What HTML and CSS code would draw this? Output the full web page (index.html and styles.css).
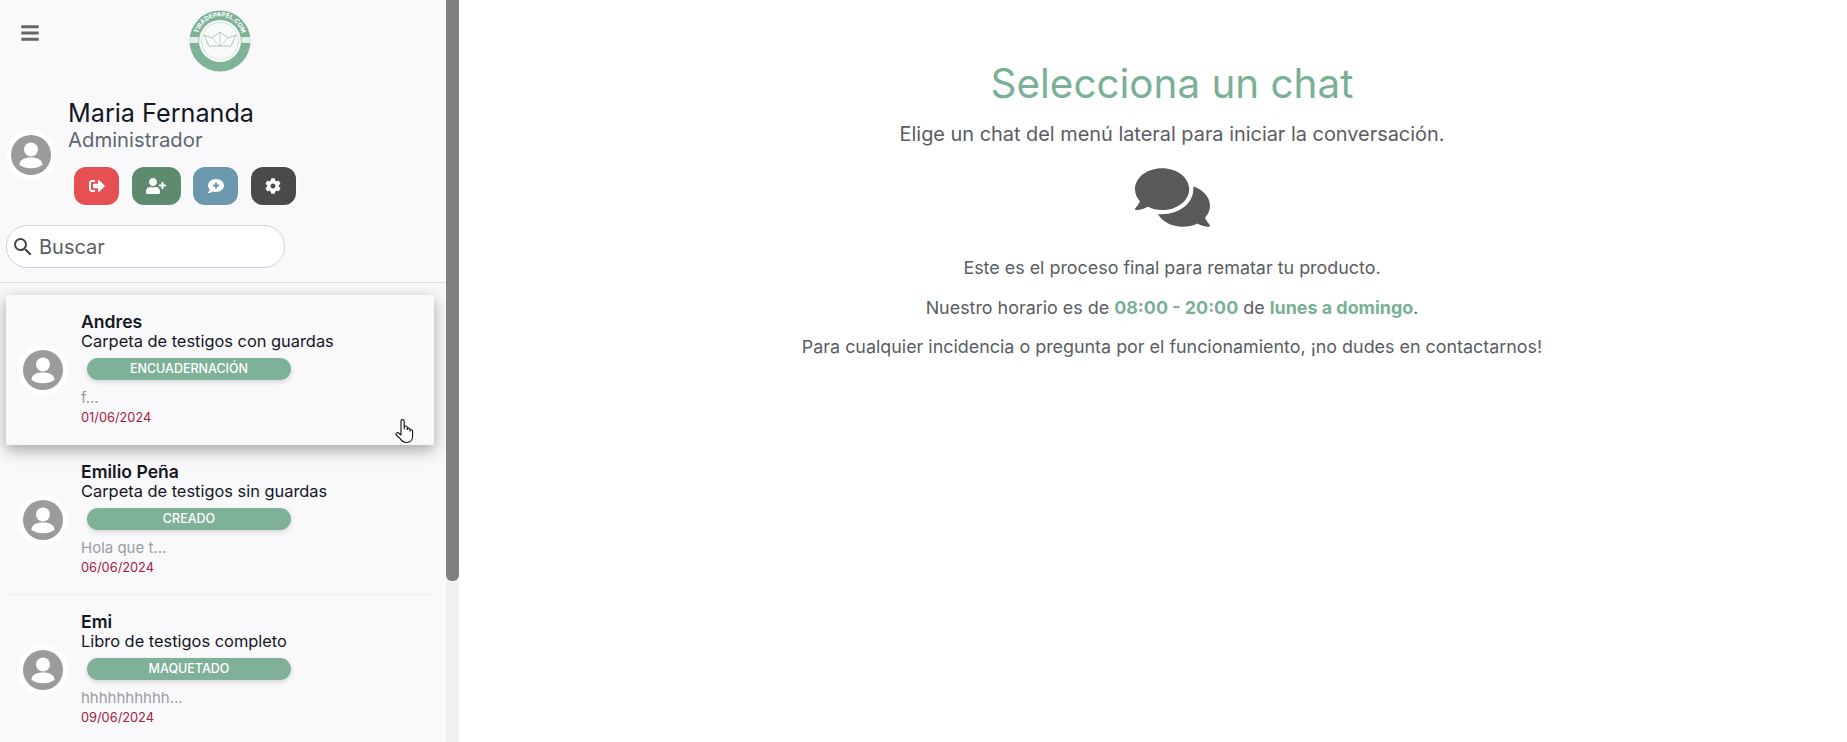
FILE: index.html

```html
<!DOCTYPE html>
<html lang="es">
<head>
  <meta charset="UTF-8" />
  <meta name="viewport" content="width=device-width, initial-scale=1.0" />
  <title>Chats</title>
  <link rel="stylesheet" href="styles.css">
</head>
<body>
  <aside class="sidebar">
    <div class="sidebar-body">
      <div class="top-bar">
        <button class="menu-btn" aria-label="Menu">
          <svg viewBox="0 0 448 512" width="18" height="20"><path d="M16 132h416c8.837 0 16-7.163 16-16V76c0-8.837-7.163-16-16-16H16C7.163 60 0 67.163 0 76v40c0 8.837 7.163 16 16 16zm0 160h416c8.837 0 16-7.163 16-16v-40c0-8.837-7.163-16-16-16H16c-8.837 0-16 7.163-16 16v40c0 8.837 7.163 16 16 16zm0 160h416c8.837 0 16-7.163 16-16v-40c0-8.837-7.163-16-16-16H16c-8.837 0-16 7.163-16 16v40c0 8.837 7.163 16 16 16z"/></svg>
        </button>
        <svg class="logo" viewBox="0 0 62 62" width="62" height="62">
          <defs>
            <path id="logoArc" d="M8.5 29a22.5 22.5 0 0 1 45 0"/>
            <path id="logoArcLow" d="M12 38a20 20 0 0 0 38 0"/>
          </defs>
          <circle cx="31" cy="31" r="30.5" fill="#7fb398"/>
          <rect x="0.5" y="27" width="9" height="6" fill="#e4efe9"/>
          <rect x="52.5" y="27" width="9" height="6" fill="#e4efe9"/>
          <circle cx="31" cy="31" r="21" fill="#f7faf8"/>
          <circle cx="31" cy="31" r="18.5" fill="none" stroke="#a9cdb9" stroke-width="0.5"/>
          <path d="M15 25l8 3 8-6 8 6 8-3-5 11H20z" fill="#fff" stroke="#8dbba3" stroke-width="0.8"/>
          <path d="M31 22v14M23 28l8 8 8-8" fill="none" stroke="#8dbba3" stroke-width="0.6"/>
          <text class="logo-text"><textPath href="#logoArc" startOffset="50%" text-anchor="middle">TIRADEPAPEL.COM</textPath></text>
          <text class="logo-small"><textPath href="#logoArcLow" startOffset="50%" text-anchor="middle">• ARTESANO •</textPath></text>
        </svg>
      </div>

      <div class="profile">
        <div class="avatar">
          <svg viewBox="0 0 40 40" width="40" height="40"><circle cx="20" cy="20" r="20" fill="#9b9b9b"/><circle cx="20" cy="14.5" r="7" fill="#fff"/><path d="M8.5 30c0-5 4.5-7.5 11.5-7.5s11.500 2.500 11.500 7.500c-3 2-7 3.300-11.500 3.300s-8.500-1.300-11.500-3.300z" fill="#fff"/></svg>
        </div>
        <div class="profile-info">
          <div class="profile-name">Maria Fernanda</div>
          <div class="profile-role">Administrador</div>
          <div class="actions">
            <button class="action action-red" aria-label="Salir">
              <svg viewBox="0 0 512 512" width="16" height="16"><path d="M497 273L329 441c-15 15-41 4.5-41-17v-96H152c-13.3 0-24-10.7-24-24v-96c0-13.3 10.7-24 24-24h136V88c0-21.4 25.9-32 41-17l168 168c9.3 9.4 9.3 24.6 0 34zM192 436v-40c0-6.6-5.4-12-12-12H96c-17.7 0-32-14.3-32-32V160c0-17.7 14.3-32 32-32h84c6.6 0 12-5.4 12-12V76c0-6.6-5.4-12-12-12H96c-53 0-96 43-96 96v192c0 53 43 96 96 96h84c6.6 0 12-5.4 12-12z"/></svg>
            </button>
            <button class="action action-green" aria-label="Nuevo usuario">
              <svg viewBox="0 0 640 512" width="20" height="16"><path d="M624 208h-64v-64c0-8.8-7.2-16-16-16h-32c-8.8 0-16 7.2-16 16v64h-64c-8.8 0-16 7.2-16 16v32c0 8.8 7.2 16 16 16h64v64c0 8.8 7.2 16 16 16h32c8.8 0 16-7.2 16-16v-64h64c8.8 0 16-7.2 16-16v-32c0-8.8-7.2-16-16-16zm-400 48c70.7 0 128-57.3 128-128S294.7 0 224 0 96 57.3 96 128s57.3 128 128 128zm89.6 32h-16.7c-22.2 10.2-46.9 16-72.9 16s-50.6-5.8-72.9-16h-16.7C60.2 288 0 348.2 0 422.4V464c0 26.5 21.5 48 48 48h352c26.5 0 48-21.5 48-48v-41.6c0-74.2-60.2-134.4-134.4-134.4z"/></svg>
            </button>
            <button class="action action-blue" aria-label="Nuevo chat">
              <svg viewBox="0 0 512 512" width="16" height="16"><path d="M256 32C114.62 32 0 125.12 0 240c0 49.56 21.41 95 57 130.74C44.46 421.05 2.7 466 2.2 466.5A8 8 0 0 0 8 480c66.26 0 116-31.75 140.6-51.38A304.66 304.66 0 0 0 256 448c141.39 0 256-93.12 256-208S397.39 32 256 32zm96 232a8 8 0 0 1-8 8h-56v56a8 8 0 0 1-8 8h-48a8 8 0 0 1-8-8v-56h-56a8 8 0 0 1-8-8v-48a8 8 0 0 1 8-8h56v-56a8 8 0 0 1 8-8h48a8 8 0 0 1 8 8v56h56a8 8 0 0 1 8 8z"/></svg>
            </button>
            <button class="action action-dark" aria-label="Ajustes">
              <svg viewBox="0 0 512 512" width="16" height="16"><path d="M487.4 315.7l-42.6-24.6c4.3-23.2 4.3-47 0-70.2l42.6-24.6c4.9-2.8 7.1-8.6 5.5-14-11.1-35.6-30-67.8-54.7-94.6-3.8-4.1-10-5.1-14.8-2.3L380.8 110c-17.9-15.4-38.5-27.3-60.8-35.1V25.8c0-5.6-3.9-10.5-9.4-11.7-36.7-8.2-74.3-7.8-109.2 0-5.5 1.2-9.4 6.1-9.4 11.7V75c-22.2 7.9-42.8 19.8-60.8 35.1L88.7 85.5c-4.9-2.8-11-1.9-14.8 2.3-24.7 26.7-43.6 58.9-54.7 94.6-1.7 5.4.6 11.2 5.5 14L67.3 221c-4.3 23.2-4.3 47 0 70.2l-42.6 24.6c-4.9 2.8-7.1 8.6-5.5 14 11.1 35.6 30 67.8 54.7 94.6 3.8 4.1 10 5.1 14.8 2.3l42.6-24.6c17.9 15.4 38.5 27.3 60.8 35.1v49.2c0 5.6 3.9 10.5 9.4 11.7 36.7 8.2 74.3 7.8 109.2 0 5.5-1.2 9.4-6.1 9.4-11.7v-49.2c22.2-7.9 42.8-19.8 60.8-35.1l42.6 24.6c4.9 2.8 11 1.9 14.8-2.3 24.7-26.7 43.6-58.9 54.7-94.6 1.5-5.5-.7-11.3-5.6-14.1zM256 336c-44.1 0-80-35.9-80-80s35.9-80 80-80 80 35.9 80 80-35.9 80-80 80z"/></svg>
            </button>
          </div>
        </div>
      </div>

      <div class="search">
        <svg viewBox="0 0 24 24" width="24" height="24"><path d="M15.5 14h-.79l-.28-.27A6.471 6.471 0 0 0 16 9.5 6.5 6.5 0 1 0 9.5 16c1.61 0 3.09-.59 4.23-1.57l.27.28v.79l5 4.99L20.49 19l-4.99-5zm-6 0C7.01 14 5 11.99 5 9.5S7.01 5 9.5 5 14 7.01 14 9.5 11.99 14 9.5 14z"/></svg>
        <span>Buscar</span>
      </div>

      <div class="chat-list">
        <div class="chat-item active">
          <div class="avatar">
            <svg viewBox="0 0 40 40" width="40" height="40"><circle cx="20" cy="20" r="20" fill="#9b9b9b"/><circle cx="20" cy="14.5" r="7" fill="#fff"/><path d="M8.5 30c0-5 4.5-7.5 11.5-7.5s11.5 2.5 11.5 7.5c-3 2-7 3.3-11.5 3.3s-8.5-1.3-11.5-3.3z" fill="#fff"/></svg>
          </div>
          <div class="chat-info">
            <div class="chat-name">Andres</div>
            <div class="chat-product">Carpeta de testigos con guardas</div>
            <div class="badge">ENCUADERNACIÓN</div>
            <div class="chat-msg">f...</div>
            <div class="chat-date">01/06/2024</div>
          </div>
          <svg class="cursor" viewBox="0 0 20 26" width="20" height="26"><path d="M6 13V3.2a1.6 1.6 0 0 1 3.2 0V11V9.5a1.5 1.5 0 0 1 3 0V11.5a1.4 1.4 0 0 1 2.8 0V13a1.3 1.3 0 0 1 2.6 0v5c0 3.6-2.2 6.5-6 6.5-3.2 0-4.6-1.2-6.2-3.6L1.4 17a1.5 1.5 0 0 1 2.4-1.8L6 17z" fill="#fff" stroke="#111" stroke-width="1.1" stroke-linejoin="round"/></svg>
        </div>
        <div class="chat-item">
          <div class="avatar">
            <svg viewBox="0 0 40 40" width="40" height="40"><circle cx="20" cy="20" r="20" fill="#9b9b9b"/><circle cx="20" cy="14.5" r="7" fill="#fff"/><path d="M8.5 30c0-5 4.5-7.5 11.5-7.5s11.5 2.5 11.5 7.5c-3 2-7 3.3-11.5 3.3s-8.5-1.3-11.5-3.3z" fill="#fff"/></svg>
          </div>
          <div class="chat-info">
            <div class="chat-name">Emilio Peña</div>
            <div class="chat-product">Carpeta de testigos sin guardas</div>
            <div class="badge">CREADO</div>
            <div class="chat-msg">Hola que t...</div>
            <div class="chat-date">06/06/2024</div>
          </div>
        </div>
        <div class="chat-item">
          <div class="avatar">
            <svg viewBox="0 0 40 40" width="40" height="40"><circle cx="20" cy="20" r="20" fill="#9b9b9b"/><circle cx="20" cy="14.5" r="7" fill="#fff"/><path d="M8.5 30c0-5 4.5-7.5 11.5-7.5s11.5 2.5 11.5 7.5c-3 2-7 3.3-11.5 3.3s-8.5-1.3-11.5-3.3z" fill="#fff"/></svg>
          </div>
          <div class="chat-info">
            <div class="chat-name">Emi</div>
            <div class="chat-product">Libro de testigos completo</div>
            <div class="badge">MAQUETADO</div>
            <div class="chat-msg">hhhhhhhhhh...</div>
            <div class="chat-date">09/06/2024</div>
          </div>
        </div>
      </div>
    </div>
    <div class="scrollbar"><div class="scrollbar-thumb"></div></div>
  </aside>

  <main class="content">
    <h1>Selecciona un chat</h1>
    <p class="lead">Elige un chat del menú lateral para iniciar la conversación.</p>
    <svg class="chat-icon" viewBox="0 0 576 512" width="75" height="67"><path d="M416 192c0-88.4-93.1-160-208-160S0 103.6 0 192c0 34.3 14.1 65.9 38 92-13.4 30.2-35.5 54.2-35.8 54.5-2.2 2.3-2.8 5.7-1.5 8.7S4.8 352 8 352c36.6 0 66.9-12.3 88.7-25 32.2 15.7 70.3 25 111.3 25 114.9 0 208-71.6 208-160zm122 220c23.9-26 38-57.7 38-92 0-66.9-53.5-124.2-129.3-148.1.9 6.6 1.3 13.3 1.3 20.1 0 105.9-107.7 192-240 192-10.8 0-21.3-.8-31.7-1.9C207.8 439.6 281.8 480 368 480c41 0 79.1-9.2 111.3-25 21.8 12.7 52.1 25 88.7 25 3.2 0 6.1-1.9 7.3-4.8 1.3-2.9.7-6.3-1.5-8.7-.3-.3-22.4-24.2-35.8-54.5z"/></svg>
    <p class="note">Este es el proceso final para rematar tu producto.</p>
    <p class="note">Nuestro horario es de <strong>08:00 - 20:00</strong> de <strong>lunes a domingo</strong>.</p>
    <p class="note">Para cualquier incidencia o pregunta por el funcionamiento, ¡no dudes en contactarnos!</p>
  </main>
</body>
</html>
```

FILE: styles.css

```css
* {
  box-sizing: border-box;
}
html, body {
  height: 100%;
}
body {
  margin: 0;
  display: flex;
  overflow: hidden;
  font-family: Inter, "Liberation Sans", sans-serif;
  background-color: #fff;
  color: #5a5d63;
}

/* sidebar */
.sidebar {
  display: flex;
  width: 459px;
  height: 100vh;
  flex-shrink: 0;
  background-color: #f9f9fc;
}
.sidebar-body {
  flex: 1;
  min-width: 0;
  overflow: hidden;
}
.scrollbar {
  width: 13px;
  background-color: #f1f1f1;
}
.scrollbar-thumb {
  height: 581px;
  background-color: #808080;
  border-radius: 0 0 6px 6px;
}
.top-bar {
  display: flex;
  align-items: flex-start;
  height: 71px;
  padding-top: 10px;
}
.menu-btn {
  width: 18px;
  height: 20px;
  padding: 0;
  margin: 13px 0 0 21px;
  border: none;
  background: none;
  fill: #666;
}
.logo {
  margin-left: 150px;
}
.logo-text {
  font-size: 6.2px;
  font-weight: 700;
  fill: #fff;
}
.logo-small {
  font-size: 3.5px;
  fill: #fff;
}
.profile {
  display: flex;
  align-items: flex-start;
  padding: 27px 0 0 6px;
}
.avatar {
  width: 50px;
  height: 50px;
  flex-shrink: 0;
  display: flex;
  align-items: center;
  justify-content: center;
  border-radius: 50%;
  background-color: #fff;
}
.profile .avatar {
  margin-top: 32px;
}
.profile-info {
  margin-left: 12px;
}
.profile-name {
  font-size: 25.2px;
  line-height: 30px;
  color: #14171f;
}
.profile-role {
  font-size: 20.3px;
  line-height: 24px;
  color: #5f6672;
}
.actions {
  display: flex;
  gap: 12.5px;
  margin: 15px 0 0 6px;
}
.action {
  display: flex;
  align-items: center;
  justify-content: center;
  width: 45px;
  height: 38px;
  padding: 0;
  border: none;
  border-radius: 12px;
  fill: #fff;
  box-shadow: 0 0 3px #fff;
}
.action-red {
  background-color: #e75053;
}
.action-green {
  width: 49px;
  background-color: #5e8a6e;
}
.action-blue {
  background-color: #6b98ac;
}
.action-dark {
  background-color: #4a4a4a;
}
.search {
  display: flex;
  align-items: center;
  gap: 4px;
  width: 279px;
  height: 43px;
  margin: 20px 0 0 6px;
  padding-left: 4px;
  border: 1px solid #ced4da;
  border-radius: 21px;
  background-color: #fff;
  fill: #444;
  font-size: 20px;
  color: #5a5d63;
}
.chat-list {
  margin-top: 14px;
  padding-top: 12px;
  border-top: 1px solid #dedfe2;
}
.chat-item {
  position: relative;
  display: flex;
  align-items: center;
  width: 428px;
  height: 150px;
  margin-left: 6px;
  padding-left: 12px;
  border-bottom: 1px solid #eceef0;
}
.chat-item.active {
  border-bottom: none;
  box-shadow: 0 5px 15px rgba(0, 0, 0, 0.35);
}
.chat-info {
  margin-left: 13px;
}
.chat-name {
  font-size: 17.6px;
  font-weight: 600;
  line-height: 20px;
  color: #14171f;
}
.chat-product {
  margin-top: -1px;
  font-size: 16.4px;
  line-height: 20px;
  color: #14171f;
}
.badge {
  width: 204px;
  height: 22px;
  margin: 7px 0 0 6px;
  border-radius: 11px;
  background-color: #7fb098;
  box-shadow: 0 2px 5px rgba(0, 0, 0, 0.15);
  font-size: 12.5px;
  font-weight: 500;
  line-height: 22px;
  text-align: center;
  color: #fff;
}
.chat-msg {
  margin-top: 8px;
  font-size: 15px;
  line-height: 20px;
  color: #9a9da3;
}
.chat-date {
  font-size: 12.8px;
  line-height: 20px;
  color: #a5203a;
}
.cursor {
  position: absolute;
  right: 19px;
  bottom: 1px;
}

/* main panel */
.content {
  flex: 1;
  padding: 57px 0 0 38px;
  text-align: center;
}
h1 {
  margin: 0;
  font-size: 40.4px;
  font-weight: 400;
  line-height: 54px;
  color: #7ab096;
}
.lead {
  margin: 10px 0 0;
  font-size: 19.9px;
  line-height: 26px;
}
.chat-icon {
  display: block;
  margin: 17px auto 0;
  fill: #58595b;
}
.note {
  margin: 17.5px 0 0;
  font-size: 17.9px;
  line-height: 22px;
}
.chat-icon + .note {
  margin-top: 26px;
}
.note strong {
  color: #7ab096;
  font-weight: 700;
}
```
